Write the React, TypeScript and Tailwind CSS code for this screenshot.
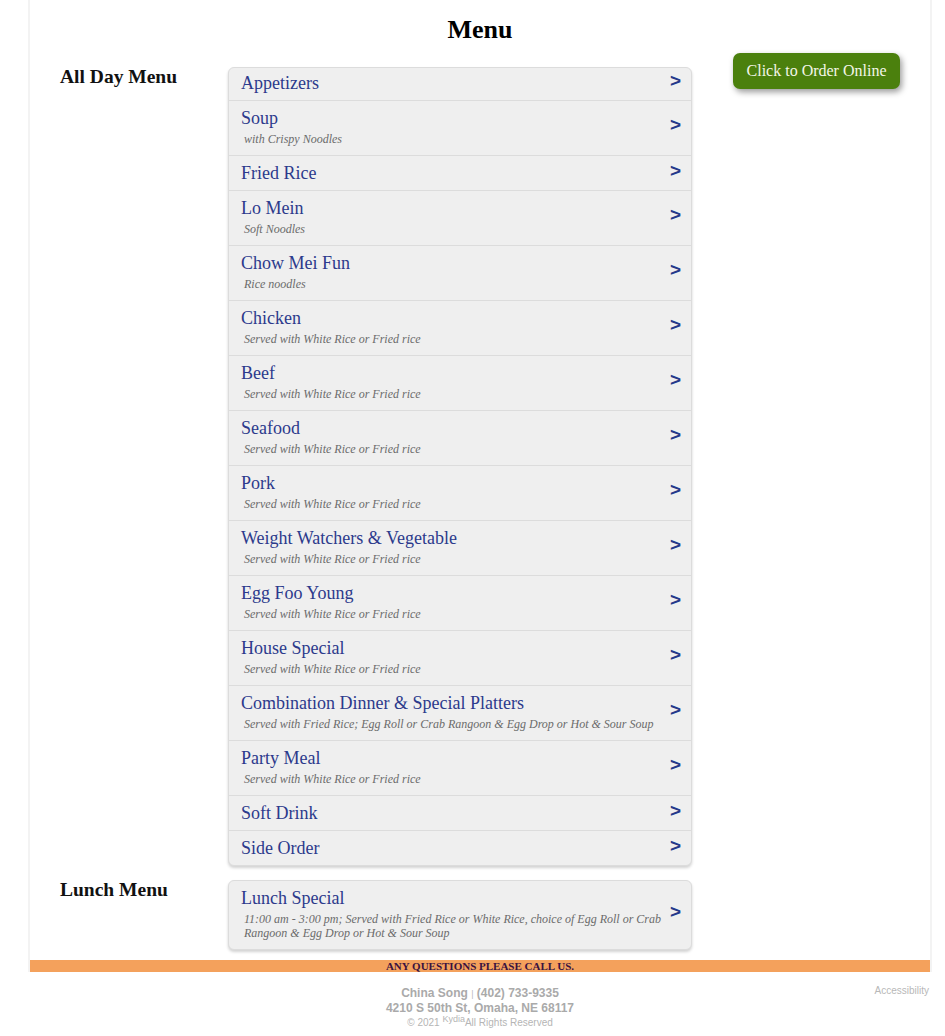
type Item = { name: string; desc?: string };

const allDay: Item[] = [
  { name: "Appetizers" },
  { name: "Soup", desc: "with Crispy Noodles" },
  { name: "Fried Rice" },
  { name: "Lo Mein", desc: "Soft Noodles" },
  { name: "Chow Mei Fun", desc: "Rice noodles" },
  { name: "Chicken", desc: "Served with White Rice or Fried rice" },
  { name: "Beef", desc: "Served with White Rice or Fried rice" },
  { name: "Seafood", desc: "Served with White Rice or Fried rice" },
  { name: "Pork", desc: "Served with White Rice or Fried rice" },
  { name: "Weight Watchers & Vegetable", desc: "Served with White Rice or Fried rice" },
  { name: "Egg Foo Young", desc: "Served with White Rice or Fried rice" },
  { name: "House Special", desc: "Served with White Rice or Fried rice" },
  {
    name: "Combination Dinner & Special Platters",
    desc: "Served with Fried Rice; Egg Roll or Crab Rangoon & Egg Drop or Hot & Sour Soup",
  },
  { name: "Party Meal", desc: "Served with White Rice or Fried rice" },
  { name: "Soft Drink" },
  { name: "Side Order" },
];

const lunch: Item[] = [
  {
    name: "Lunch Special",
    desc: "11:00 am - 3:00 pm; Served with Fried Rice or White Rice, choice of Egg Roll or Crab Rangoon & Egg Drop or Hot & Sour Soup",
  },
];

function Row({ item }: { item: Item }) {
  return (
    <div
      className={`flex items-center border-b border-[#dcdcdc] last:border-b-0 pl-[12px] pr-[10px] ${
        item.desc ? "pt-[7px] pb-[9px]" : "pt-[7px] pb-[7px] first:pt-[5px]"
      }`}
    >
      <div className="flex-1 min-w-0">
        <div className="text-[18px] leading-[20px] text-[#2c3a8c]">{item.name}</div>
        {item.desc && (
          <div className="mt-[4px] pl-[3px] pr-[8px] text-[12px] leading-[14px] italic text-[#6b6b6b]">
            {item.desc}
          </div>
        )}
      </div>
      <span className="-mt-[4px] font-['Liberation_Sans',Arial,sans-serif] font-bold text-[19px] leading-[20px] text-[#25388a]">
        &gt;
      </span>
    </div>
  );
}

function Section({ title, items }: { title: string; items: Item[] }) {
  return (
    <div className="flex items-start">
      <h2 className="w-[168px] text-[19.5px] leading-[20px] font-bold text-[#111]">{title}</h2>
      <div className="w-[464px] bg-[#efefef] border border-[#dcdcdc] rounded-[6px] shadow-[0_2px_3px_rgba(0,0,0,0.18)]">
        {items.map((it) => (
          <Row key={it.name} item={it} />
        ))}
      </div>
    </div>
  );
}

export default function App() {
  return (
    <div className="min-h-[1036px] bg-white font-['Liberation_Serif','Times_New_Roman',serif] text-black">
      <div className="ml-[28px] w-[904px] border-x-2 border-[#f3f3f3]">
        <h1 className="pt-[14px] text-center text-[26px] leading-[32px] font-bold">Menu</h1>
        <div className="mt-[21px] flex items-start pl-[30px]">
          <div className="flex flex-col gap-[14px]">
            <Section title="All Day Menu" items={allDay} />
            <Section title="Lunch Menu" items={lunch} />
          </div>
          <button className="ml-[41px] -mt-[14px] w-[167px] h-[36px] rounded-[7px] bg-[#4b800d] text-[16px] text-[#f3f6e8] shadow-[2px_3px_6px_rgba(0,0,0,0.4)]">
            Click to Order Online
          </button>
        </div>
        <div className="mt-[10px] bg-[#f4a15c] text-center text-[11px] leading-[12px] font-bold text-[#3a1240]">
          ANY QUESTIONS PLEASE CALL US.
        </div>
      </div>
      <div className="relative ml-[30px] w-[900px] pt-[14px] text-center font-['Liberation_Sans',Arial,sans-serif] text-[#aaa]">
        <div className="text-[12px] leading-[14px] font-bold">
          China Song <span className="font-normal text-[9px] text-[#bbb]">|</span> (402) 733-9335
        </div>
        <div className="text-[12px] leading-[14px] font-bold">4210 S 50th St, Omaha, NE 68117</div>
        <div className="mt-[1px] text-[10px] leading-[14px] text-[#b5b5b5]">
          © 2021 <sup className="text-[9px]">Kydia</sup>All Rights Reserved
        </div>
        <div className="absolute right-[1px] top-[13px] text-[10px] leading-[12px] font-normal text-[#b8b8b8]">
          Accessibility
        </div>
      </div>
    </div>
  );
}
